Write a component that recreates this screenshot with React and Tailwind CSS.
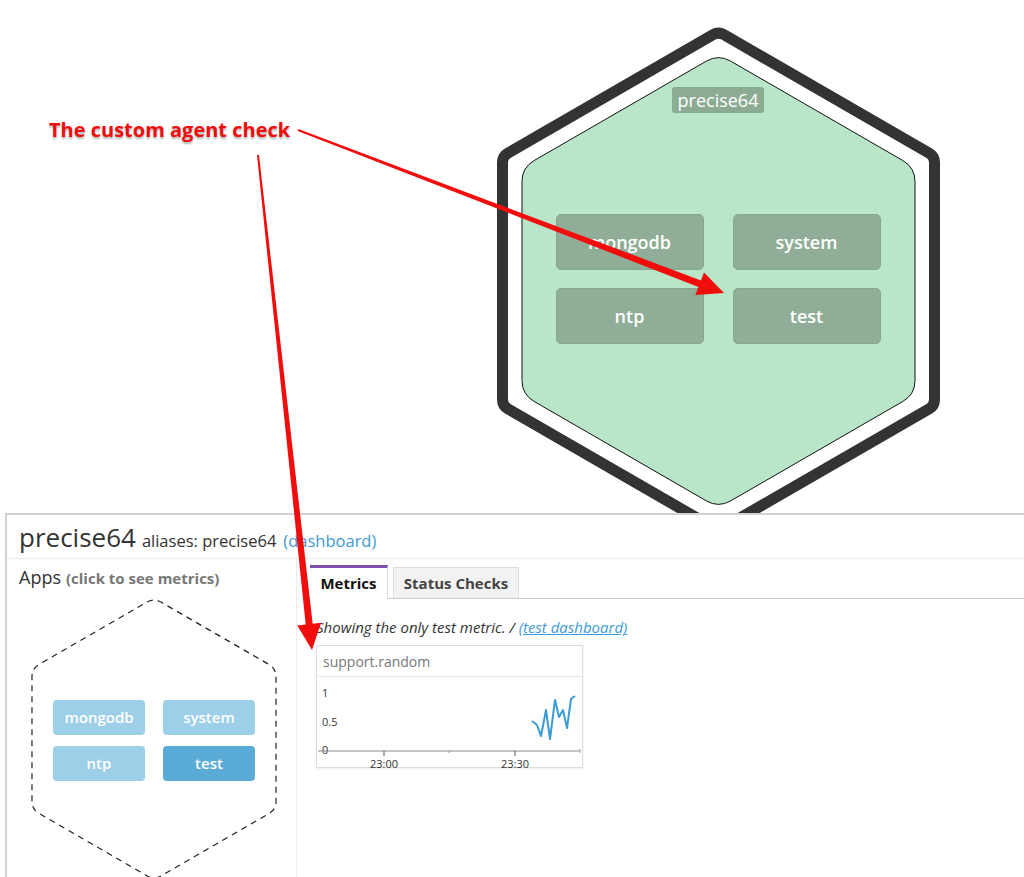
import React from "react";

const font = { fontFamily: '"Open Sans", "Noto Sans", sans-serif' };

// pointy-top hexagon with rounded corners
const hexPath = (cx, cy, R, r) => {
  const pts = [];
  for (let i = 0; i < 6; i++) {
    const a = (Math.PI / 180) * (-90 + i * 60);
    pts.push([cx + R * Math.cos(a), cy + R * Math.sin(a)]);
  }
  let d = "";
  for (let i = 0; i < 6; i++) {
    const p = pts[i];
    const prev = pts[(i + 5) % 6];
    const next = pts[(i + 1) % 6];
    const t = r / R;
    const a = [p[0] + (prev[0] - p[0]) * t, p[1] + (prev[1] - p[1]) * t];
    const b = [p[0] + (next[0] - p[0]) * t, p[1] + (next[1] - p[1]) * t];
    d += `${i === 0 ? "M" : "L"}${a[0]},${a[1]} Q${p[0]},${p[1]} ${b[0]},${b[1]} `;
  }
  return d + "Z";
};

// tapered arrow polygon
const arrow = (sx, sy, tx, ty, w0, w1, hl, hw) => {
  const dx = tx - sx;
  const dy = ty - sy;
  const len = Math.hypot(dx, dy);
  const ux = dx / len;
  const uy = dy / len;
  const nx = -uy;
  const ny = ux;
  const bx = tx - ux * hl;
  const by = ty - uy * hl;
  const p = [
    [sx + nx * w0, sy + ny * w0],
    [bx + nx * w1, by + ny * w1],
    [bx + nx * hw, by + ny * hw],
    [tx, ty],
    [bx - nx * hw, by - ny * hw],
    [bx - nx * w1, by - ny * w1],
    [sx - nx * w0, sy - ny * w0],
  ];
  return p.map((q) => q.join(",")).join(" ");
};

const chartPts = [
  [215, 44], [220, 48], [224, 59], [229, 33], [233, 62], [238, 23],
  [242, 40], [246, 33], [250, 51], [254, 22], [258, 19],
];

const HostHex = () => (
  <div className="relative w-[460px] h-[513px] shrink-0">
    <svg className="absolute inset-0" width="460" height="560" viewBox="0 0 460 560">
      <path d={hexPath(228.5, 281, 249.4, 6)} fill="none" stroke="#333333" strokeWidth="11" strokeLinejoin="round" />
      <path d={hexPath(228.5, 281, 226.9, 14)} fill="#b9e6c8" stroke="#111" strokeWidth="1" />
    </svg>
    <div className="relative flex flex-col items-center pt-[87px] pr-[4px]">
      <div className="h-[26px] px-[6px] rounded-[3px] bg-[#8cab93] text-white text-[18px] leading-[26px]">
        precise64
      </div>
      <div className="grid grid-cols-[148px_148px] gap-x-[29px] gap-y-[18px] mt-[101px]">
        {["mongodb", "system", "ntp", "test"].map((n) => (
          <div
            key={n}
            className="h-[56px] rounded-[5px] bg-[#90ae97] border border-[#88a68f] flex items-center justify-center text-white text-[18px] font-semibold"
          >
            {n}
          </div>
        ))}
      </div>
    </div>
  </div>
);

const AppsHex = () => (
  <div className="relative w-[260px] h-[290px] ml-[21px] mt-[3px]">
    <svg className="absolute inset-0" width="260" height="290" viewBox="0 0 260 290">
      <path d={hexPath(126, 145, 140.9, 8)} fill="none" stroke="#222" strokeWidth="1.2" strokeDasharray="6 5" />
    </svg>
    <div className="relative grid grid-cols-[92px_92px] gap-x-[18px] gap-y-[11px] pt-[106px] pl-[25px]">
      {["mongodb", "system", "ntp", "test"].map((n) => (
        <div
          key={n}
          className={`h-[35px] rounded-[4px] flex items-center justify-center text-white text-[15px] font-semibold ${
            n === "test" ? "bg-[#5aacd6]" : "bg-[#9dcfe8]"
          }`}
        >
          {n}
        </div>
      ))}
    </div>
  </div>
);

const Chart = () => (
  <div className="w-[267px] h-[123px] border border-[#dddddd] shadow-[0_1px_2px_rgba(0,0,0,0.08)] bg-white ml-[6px] mt-[7px]">
    <div className="h-[31px] border-b border-[#e6e6e6] px-[6px] text-[14px] leading-[31px] text-[#777]">
      support.random
    </div>
    <svg className="overflow-visible" width="265" height="90" viewBox="0 0 265 90">
      <g fill="#333" fontSize="11" fontFamily='"Open Sans", sans-serif'>
        <text x="5" y="20">1</text>
        <text x="5" y="49">0.5</text>
        <text x="5" y="77">0</text>
        <text x="67" y="91" textAnchor="middle">23:00</text>
        <text x="198" y="91" textAnchor="middle">23:30</text>
      </g>
      <line x1="1" y1="74" x2="263" y2="74" stroke="#888" strokeWidth="1" />
      <line x1="67" y1="74" x2="67" y2="79" stroke="#555" />
      <line x1="198" y1="74" x2="198" y2="79" stroke="#555" />
      <line x1="132" y1="74" x2="132" y2="76" stroke="#999" />
      <line x1="263" y1="72" x2="263" y2="76" stroke="#999" />
      <polyline
        points={chartPts.map((p) => p.join(",")).join(" ")}
        fill="none"
        stroke="#3a9bd4"
        strokeWidth="2"
        strokeLinejoin="round"
      />
    </svg>
  </div>
);

export default function App() {
  return (
    <div className="relative w-[1024px] h-[877px] overflow-hidden bg-white" style={font}>
      <div className="flex h-[513px] overflow-hidden">
        <div className="w-[490px] shrink-0 pl-[49px] pt-[115px]">
          <span className="text-[20px] font-bold text-[#f10d0d] [text-shadow:0_2px_2px_rgba(0,0,0,0.3)]">
            The custom agent check
          </span>
        </div>
        <HostHex />
      </div>

      <div className="ml-[5px] h-[364px] border-l-2 border-t-2 border-[#d2d2d2] bg-white flex flex-col overflow-hidden">
        <div className="h-[44px] shrink-0 border-b border-[#ececec] flex items-end pl-[12px] pb-[6px] text-[#333]">
          <span className="text-[26px] leading-[30px]">precise64</span>
          <span className="text-[16.5px] ml-[6px] leading-[22px]">aliases: precise64</span>
          <span className="text-[16.5px] ml-[7px] leading-[22px] text-[#3d9ad4]">(dashboard)</span>
        </div>
        <div className="flex flex-1 min-h-0">
          <div className="w-[290px] border-r border-[#ececec]">
            <div className="pl-[12px] pt-[5px] text-[#333] flex items-baseline">
              <span className="text-[18px]">Apps</span>
              <span className="text-[15px] font-bold text-[#777] ml-[5px]">(click to see metrics)</span>
            </div>
            <AppsHex />
          </div>
          <div className="flex-1 pl-[13px] pt-[6px]">
            <div className="flex items-end border-b border-[#cccccc] h-[34px]">
              <div className="w-[78px] h-[34px] -mb-px bg-white border-t-[3px] border-[#7b4fa9] border-r border-r-[#dddddd] flex items-center justify-center text-[15px] font-bold text-[#111]">
                Metrics
              </div>
              <div className="ml-[5px] w-[126px] h-[31px] bg-[#f2f2f2] border border-[#dddddd] border-b-0 flex items-center justify-center text-[15px] font-bold text-[#444]">
                Status Checks
              </div>
            </div>
            <div className="pl-[6px] pt-[18px] text-[15px] italic text-[#333] leading-[21px]">
              Showing the only test metric. /{" "}
              <span className="text-[#3d9ad4] underline">(test dashboard)</span>
            </div>
            <Chart />
          </div>
        </div>
      </div>

      <svg className="absolute inset-0 pointer-events-none" width="1024" height="877" viewBox="0 0 1024 877">
        <polygon points={arrow(298, 130, 724, 293, 1, 3.5, 26, 12)} fill="#f20d0d" />
        <polygon points={arrow(258, 155, 312, 650, 1, 3.5, 26, 12)} fill="#f20d0d" />
      </svg>
    </div>
  );
}
